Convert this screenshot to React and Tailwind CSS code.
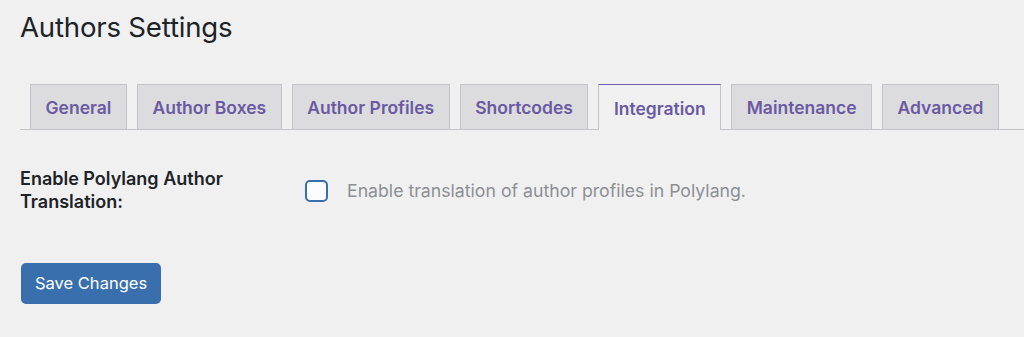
import React from 'react';

const tabs = ['General', 'Author Boxes', 'Author Profiles', 'Shortcodes', 'Integration', 'Maintenance', 'Advanced'];
const active = 'Integration';

export default function App() {
    return (
        <div className="min-h-[337px] w-full bg-[#f0f0f1] font-['Inter',sans-serif] text-[#1d2327]">
            <div className="pl-5 pt-[7px]">
                <h1 className="text-[27.6px] font-normal leading-[40px] tracking-[-0.2px]">Authors Settings</h1>

                <div className="mt-[37px] flex items-end gap-[10px] border-b border-[#c3c4c7] pl-[10px]">
                    {tabs.map((tab) =>
                        tab === active ? (
                            <div
                                key={tab}
                                className="-mb-px flex h-[46px] items-center border border-b-0 border-[#c3c4c7] border-t-[#7160a9] bg-[#f0f0f1] px-[14.5px] pt-[3px] text-[17.5px] font-semibold text-[#6a5aa2]"
                            >
                                {tab}
                            </div>
                        ) : (
                            <div
                                key={tab}
                                className="flex h-[45px] items-center border border-b-0 border-[#c3c4c7] bg-[#dcdcde] px-[14.5px] pt-[3px] text-[17.5px] font-semibold text-[#6a5aa2]"
                            >
                                {tab}
                            </div>
                        )
                    )}
                </div>

                <div className="mt-[36px] flex items-start">
                    <div className="w-[285px] pt-px text-[18px] font-semibold leading-[23px]">
                        Enable Polylang Author
                        <br />
                        Translation:
                    </div>
                    <label className="mt-[12px] flex items-center">
                        <span className="h-[22px] w-[23px] rounded-[5px] border-2 border-[#3a6fae] bg-[#fbfcfe]" />
                        <span className="ml-[19px] text-[17.7px] text-[#8c8f94]">
                            Enable translation of author profiles in Polylang.
                        </span>
                    </label>
                </div>

                <button
                    type="button"
                    className="mt-[50px] ml-px h-[41px] rounded-[5px] bg-[#3a6fad] px-[14px] text-[16.5px] text-white"
                >
                    Save Changes
                </button>
            </div>
        </div>
    );
}
